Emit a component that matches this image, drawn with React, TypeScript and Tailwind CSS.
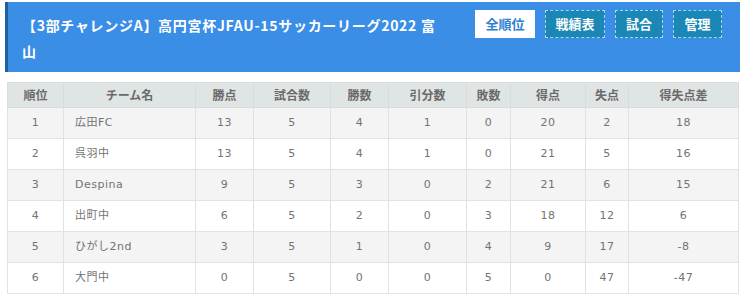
import React from 'react';

const cols = [
  { label: '順位', w: 56 },
  { label: 'チーム名', w: 132 },
  { label: '勝点', w: 58 },
  { label: '試合数', w: 77 },
  { label: '勝数', w: 58 },
  { label: '引分数', w: 78 },
  { label: '敗数', w: 44 },
  { label: '得点', w: 75 },
  { label: '失点', w: 43 },
  { label: '得失点差', w: 110 },
];

const rows: (string | number)[][] = [
  [1, '広田FC', 13, 5, 4, 1, 0, 20, 2, 18],
  [2, '呉羽中', 13, 5, 4, 1, 0, 21, 5, 16],
  [3, 'Despina', 9, 5, 3, 0, 2, 21, 6, 15],
  [4, '出町中', 6, 5, 2, 0, 3, 18, 12, 6],
  [5, 'ひがし2nd', 3, 5, 1, 0, 4, 9, 17, -8],
  [6, '大門中', 0, 5, 0, 0, 5, 0, 47, -47],
];

const tabs = [
  { label: '全順位', active: true, w: 'w-[60px]' },
  { label: '戦績表', active: false, w: 'w-[60px]' },
  { label: '試合', active: false, w: 'w-[48px]' },
  { label: '管理', active: false, w: 'w-[49px]' },
];

export default function App() {
  return (
    <div className="w-[747px] h-[300px] bg-white overflow-hidden font-['Noto_Sans_CJK_JP',sans-serif]">
      <div className="ml-[5px] mt-[2px] w-[735px] h-[70px] bg-[#3a8ee6] border-l-[3px] border-[#1f5f9e] flex justify-between">
        <h1 className="pl-[14px] pt-[10px] w-[441px] text-white font-bold text-[14px] leading-[26px] tracking-[0.7px]">
          【3部チャレンジA】高円宮杯JFAU-15サッカーリーグ2022 富山
        </h1>
        <div className="flex gap-[10px] pt-[8px] pr-[18px] items-start">
          {tabs.map((t) =>
            t.active ? (
              <div key={t.label} className={`${t.w} h-[28px] bg-white text-[#2d7fd0] text-[13px] font-bold flex items-center justify-center`}>
                {t.label}
              </div>
            ) : (
              <div key={t.label} className={`${t.w} h-[28px] bg-[#1b87b4] border border-dashed border-[#a8d4ee] text-white text-[13px] font-bold flex items-center justify-center`}>
                {t.label}
              </div>
            )
          )}
        </div>
      </div>

      <div className="ml-[7px] mt-[10px] w-[731px]">
        <table className="table-fixed border-collapse w-[731px] text-[11px] text-[#737373] font-['DejaVu_Sans','Noto_Sans_CJK_JP',sans-serif]">
          <colgroup>
            {cols.map((c) => (
              <col key={c.label} style={{ width: c.w }} />
            ))}
          </colgroup>
          <thead>
            <tr className="h-[25px] bg-[#dfe5e4]">
              {cols.map((c) => (
                <th key={c.label} className="font-bold text-[#6a6a6a] text-[12px] border border-[#d8dcdc] font-['Noto_Sans_CJK_JP',sans-serif]">
                  {c.label}
                </th>
              ))}
            </tr>
          </thead>
          <tbody>
            {rows.map((r, i) => (
              <tr key={i} className={`h-[31px] ${i % 2 === 0 ? 'bg-[#f4f4f4]' : 'bg-white'}`}>
                {r.map((v, j) => (
                  <td
                    key={j}
                    className={`border border-[#e2e2e2] tracking-[0.5px] ${j === 1 ? 'text-left pl-[11px]' : 'text-center'}`}
                  >
                    {v}
                  </td>
                ))}
              </tr>
            ))}
          </tbody>
        </table>
      </div>
    </div>
  );
}
